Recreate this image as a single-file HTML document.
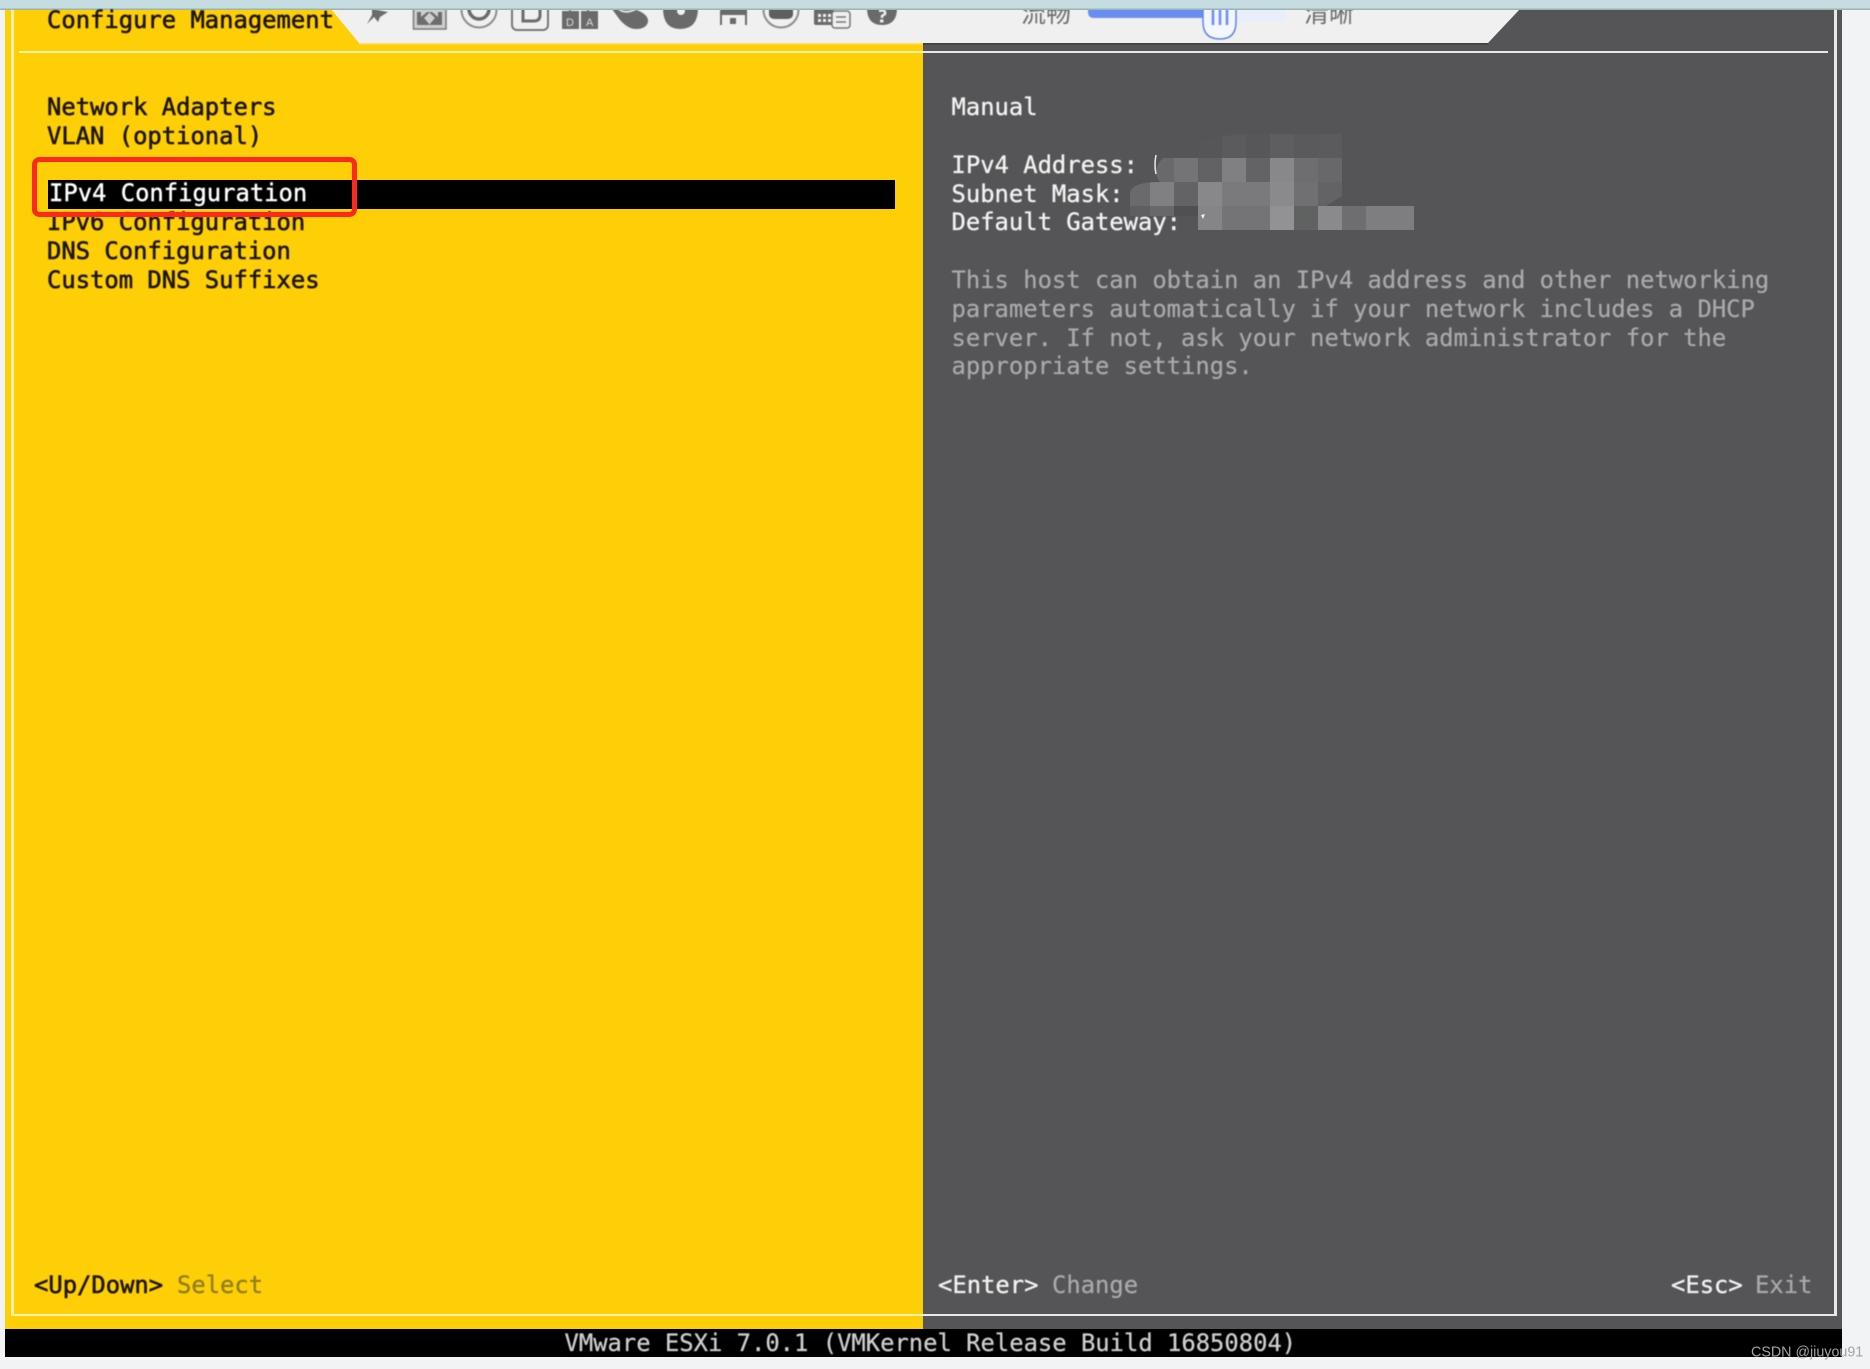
<!DOCTYPE html>
<html><head><meta charset="utf-8"><title>ESXi</title>
<style>
html,body{margin:0;padding:0;width:1870px;height:1369px;overflow:hidden;background:#f2f3f5}
svg{display:block;position:absolute;left:0;top:0}
.m{font-family:"DejaVu Sans Mono","Liberation Mono",monospace;font-size:23.83px;white-space:pre}
.soft{filter:blur(.55px)}
</style></head><body>
<svg width="1870" height="1369" viewBox="0 0 1870 1369" xmlns="http://www.w3.org/2000/svg">
<defs><clipPath id="mos"><path d="M1130 230V194Q1130 182 1160 182Q1150 170 1165 156Q1200 136 1246 134H1342V196L1326 206H1414V230H1198L1150 230Z"/></clipPath></defs>
<rect width="1870" height="1369" fill="#f2f3f5"/>
<rect x="5" y="9" width="918" height="1320" fill="#fecf07"/>
<rect x="923" y="9" width="919" height="1320" fill="#555456"/>
<rect x="5" y="1329" width="1837" height="28" fill="#000"/>
<polygon points="331,9 1520,9 1488,43 359,43" fill="#f0f0f0"/>
<rect x="359" y="43" width="564" height="1.5" fill="#ffe26a"/>
<rect x="923" y="43" width="565" height="1.5" fill="#3e3e3f"/>

<!-- frame -->
<rect x="19" y="51" width="904" height="2" fill="#fff3a8"/>
<rect x="923" y="51" width="905" height="2" fill="#e8e8e8"/>
<rect x="11" y="9" width="3" height="1307" fill="#fff3a8"/>
<rect x="11" y="1314" width="912" height="2" fill="#fff3a8"/>
<rect x="923" y="1314" width="913" height="2" fill="#e8e8e8"/>
<rect x="1834" y="9" width="3" height="1307" fill="#e8e8e8"/>

<!-- highlight -->
<rect x="48" y="180" width="847" height="29" fill="#000"/>

<!-- toolbar icons -->
<g class="soft">
<path d="M372 9 388 12 380 17 378 22 374 17 367 24 372 15Z" fill="#6b6b6b"/>
<path d="M413.500 8H446V29H413.500Z" fill="#cfcfcf" stroke="#777" stroke-width="1.500"/>
<path d="M417 12H421V17L427 12H430L424 18 430 25H417ZM442 12H438V17L432 12H429L435 18 429 25H442Z" fill="#6d6d6d"/>
<circle cx="479" cy="10" r="17.500" fill="none" stroke="#8c8c8c" stroke-width="2"/>
<circle cx="479" cy="9" r="10" fill="none" stroke="#6a6a6a" stroke-width="3.500"/>
<rect x="512" y="0" width="36" height="30" rx="5" fill="none" stroke="#777" stroke-width="2"/>
<path d="M523 8V21H534Q540 21 540 15V8" fill="none" stroke="#6d6d6d" stroke-width="3"/>
<path d="M562 11H579V29H562ZM581 11H598V29H581Z" fill="#6a6a6a"/>
<path d="M570 11V8H588V11" fill="none" stroke="#888" stroke-width="2"/>
<text x="566" y="26" font-family="Liberation Sans" font-size="11" fill="#ddd">D</text>
<text x="586" y="26" font-family="Liberation Sans" font-size="11" fill="#ddd">A</text>
<path d="M612 9 634 9Q649 14 648 22 646 29 636 29 628 29 620 20Z" fill="#6a6a6a"/>
<path d="M618 8Q624 15 636 9" fill="none" stroke="#e8e8e8" stroke-width="2"/>
<path d="M663 8H698Q698 29 680 29 663 29 663 8Z" fill="#6a6a6a"/>
<circle cx="681" cy="11" r="4" fill="#f0f0f0"/>
<path d="M721 25V12Q721 9 724 9H746V25" fill="none" stroke="#6a6a6a" stroke-width="2"/>
<path d="M722 9H746V15H722Z" fill="#6a6a6a"/>
<rect x="730" y="18" width="6" height="6" fill="#6a6a6a"/>
<circle cx="781" cy="10" r="17.500" fill="none" stroke="#8c8c8c" stroke-width="2"/>
<path d="M769 9H793V15Q792 19 787 19H775Q770 19 769 15Z" fill="#5f5f5f"/>
<rect x="814" y="9" width="20" height="16" rx="2" fill="#6a6a6a"/>
<path d="M818 14h3v3h-3zM823 14h3v3h-3zM828 14h3v3h-3zM818 19h3v3h-3zM823 19h3v3h-3zM828 19h3v3h-3z" fill="#eee"/>
<rect x="832" y="11" width="18" height="17" rx="3" fill="#f0f0f0" stroke="#777" stroke-width="1.500"/>
<path d="M836 17H846M836 22H846" stroke="#777" stroke-width="1.500"/>
<path d="M867 8H897Q897 25 882 25 867 25 867 8Z" fill="#6a6a6a"/>
<path d="M879 11Q886 9 885 14L882 16V18" fill="none" stroke="#eee" stroke-width="2.500"/>
<rect x="880" y="19.500" width="3.500" height="3" fill="#eee"/>
</g>

<!-- slider -->
<g class="soft">
<text x="1021" y="22" font-family="'Liberation Sans','Noto Sans CJK SC',sans-serif" font-size="25" fill="#6c6c6c">流畅</text>
<text x="1304" y="22" font-family="'Liberation Sans','Noto Sans CJK SC',sans-serif" font-size="25" fill="#6c6c6c">清晰</text>
<rect x="1200" y="8" width="86" height="14" rx="3" fill="#e8eefa"/>
<path d="M1088 8H1205V18H1094Q1088 18 1088 12Z" fill="#6a8ef0"/>
<path d="M1203 8V22Q1203 39 1220 39 1236 39 1236 22V8Z" fill="#f3f6fe" stroke="#5f85e0" stroke-width="1.500"/>
<path d="M1213 9V25M1220 9V25M1227 9V25" stroke="#6a8ef0" stroke-width="2.500"/>
</g>

<!-- top bar -->
<rect x="0" y="0" width="1870" height="9" fill="#c5dce0"/>
<rect x="0" y="8.500" width="1870" height="1.500" fill="#9db4b5"/>

<!-- mosaic -->
<g clip-path="url(#mos)" shape-rendering="crispEdges">
<rect x="1198" y="134" width="24" height="24" fill="#565557"/><rect x="1222" y="134" width="24" height="24" fill="#5b5a5c"/><rect x="1246" y="134" width="24" height="24" fill="#575658"/><rect x="1270" y="134" width="24" height="24" fill="#5e5d5f"/><rect x="1294" y="134" width="24" height="24" fill="#5a595b"/><rect x="1318" y="134" width="24" height="24" fill="#5b5a5c"/>
<rect x="1150" y="158" width="24" height="24" fill="#69686a"/><rect x="1174" y="158" width="24" height="24" fill="#747375"/><rect x="1198" y="158" width="24" height="24" fill="#626163"/><rect x="1222" y="158" width="24" height="24" fill="#807f81"/><rect x="1246" y="158" width="24" height="24" fill="#636264"/><rect x="1270" y="158" width="24" height="24" fill="#88878a"/><rect x="1294" y="158" width="24" height="24" fill="#6e6d6f"/><rect x="1318" y="158" width="24" height="24" fill="#68676a"/>
<rect x="1126" y="182" width="24" height="24" fill="#6a696b"/><rect x="1150" y="182" width="24" height="24" fill="#807f81"/><rect x="1174" y="182" width="24" height="24" fill="#636264"/><rect x="1198" y="182" width="24" height="24" fill="#88878a"/><rect x="1222" y="182" width="48" height="24" fill="#7a797b"/><rect x="1270" y="182" width="24" height="24" fill="#8a898b"/><rect x="1294" y="182" width="24" height="24" fill="#706f71"/><rect x="1318" y="182" width="24" height="24" fill="#636264"/>
<rect x="1126" y="206" width="24" height="10" fill="#5f5e60"/><rect x="1150" y="206" width="24" height="10" fill="#68676a"/><rect x="1174" y="206" width="24" height="10" fill="#504f51"/>
<rect x="1198" y="206" width="24" height="24" fill="#858486"/><rect x="1222" y="206" width="48" height="24" fill="#747375"/><rect x="1270" y="206" width="24" height="24" fill="#929193"/><rect x="1294" y="206" width="24" height="24" fill="#606161"/><rect x="1318" y="206" width="24" height="24" fill="#8a898b"/><rect x="1342" y="206" width="24" height="24" fill="#6e6d6f"/><rect x="1366" y="206" width="48" height="24" fill="#7e7d7f"/>
</g>
<path d="M1156 155Q1154 165 1156 174" fill="none" stroke="#e8e8e8" stroke-width="1.500"/>
<path d="M1201 215L1205 214 1203 219Z" fill="#f0f0f0"/>

<!-- text -->
<g class="m soft" xml:space="preserve">
<g fill="#1c1500" stroke="#1c1500" stroke-width=".6">
<text x="47" y="28">Configure Management</text>
<text x="47" y="115">Network Adapters</text>
<text x="47" y="144">VLAN (optional)</text>
<text x="47" y="230">IPv6 Configuration</text>
<text x="47" y="259">DNS Configuration</text>
<text x="47" y="288">Custom DNS Suffixes</text>
<text x="34" y="1293">&lt;Up/Down&gt;</text>
</g>
<text x="177" y="1293" fill="#8f7d22" stroke="#8f7d22" stroke-width=".3">Select</text>
<text x="49" y="201" fill="#fff" stroke="#fff" stroke-width=".4">IPv4 Configuration</text>
<g fill="#f2f2f2" stroke="#f2f2f2" stroke-width=".35">
<text x="951.500" y="115">Manual</text>
<text x="951.500" y="173">IPv4 Address: </text>
<text x="951.500" y="202">Subnet Mask:</text>
<text x="951.500" y="230">Default Gateway:</text>
<text x="938" y="1293">&lt;Enter&gt;</text>
<text x="1671" y="1293">&lt;Esc&gt;</text>
</g>
<g fill="#a9a9ab" stroke="#a9a9ab" stroke-width=".25">
<text x="951.500" y="288">This host can obtain an IPv4 address and other networking</text>
<text x="951.500" y="317">parameters automatically if your network includes a DHCP</text>
<text x="951.500" y="346">server. If not, ask your network administrator for the</text>
<text x="951.500" y="374">appropriate settings.</text>
<text x="1052" y="1293">Change</text>
<text x="1755" y="1293">Exit</text>
</g>
<text x="564.500" y="1351" fill="#cfcfcf" stroke="#cfcfcf" stroke-width=".25">VMware ESXi 7.0.1 (VMKernel Release Build 16850804)</text>
</g>

<!-- red box -->
<rect x="34.500" y="159.500" width="320" height="55" rx="5" fill="none" stroke="#fb2a1c" stroke-width="5"/>

<text x="1751" y="1356.500" font-family="'Liberation Sans',sans-serif" font-size="14.300" fill="#a3a3a3">CSDN @jiuyou91</text>
</svg>
</body></html>
